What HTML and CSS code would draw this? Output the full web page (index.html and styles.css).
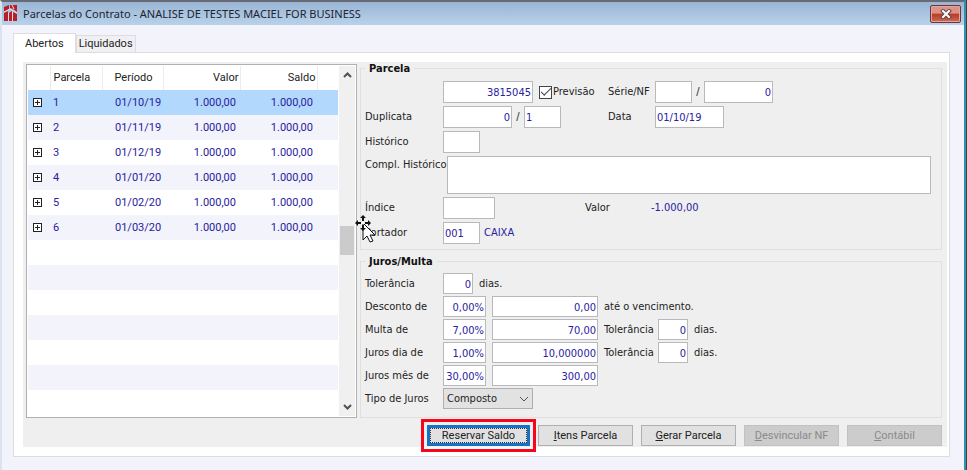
FILE: index.html
```html
<!DOCTYPE html>
<html lang="pt-BR">
<head>
    <meta charset="UTF-8">
    <meta name="viewport" content="width=device-width, initial-scale=1.0">
    <title>Parcelas do Contrato</title>
    <link rel="stylesheet" href="styles.css">
</head>
<body>
    <div class="window">
        <header class="titlebar">
            <svg class="logo" width="14" height="17" viewBox="0 0 14 17">
                <path d="M0 2L5 0V4L0 7ZM6 0H13V7L9 4L6 3Z" fill="#b5202a"/>
                <path d="M0 8L4 6V16H0ZM5 8L8 6V16H5ZM9 7L13 9V16H9Z" fill="#b5202a"/>
                <path d="M0 7L6 4L13 8M4.500 8V16M8.500 7V16M8 0L10 4" fill="none" stroke="#f3d9dc"/>
            </svg>
            <h1>Parcelas do Contrato - ANALISE DE TESTES MACIEL FOR BUSINESS</h1>
            <button class="close" aria-label="Fechar">
                <svg width="12" height="10" viewBox="0 0 12 10">
                    <path d="M3 2L9 8M9 2L3 8" stroke="#5c4650" stroke-width="4" stroke-linecap="square"/>
                    <path d="M3 2L9 8M9 2L3 8" stroke="#fff" stroke-width="2" stroke-linecap="square"/>
                </svg>
            </button>
        </header>
        <main class="content">
            <div class="tabs" role="tablist">
                <button class="tab active" role="tab" aria-selected="true">Abertos</button>
                <button class="tab" role="tab" aria-selected="false">Liquidados</button>
            </div>
            <div class="page">
                <div class="panel">
                    <div class="columns">
                        <div class="list">
                            <table>
                                <thead>
                                    <tr><th class="c_exp"></th><th class="c_num">Parcela</th><th class="c_date">Período</th><th class="c_val">Valor</th><th class="c_val">Saldo</th><th></th></tr>
                                </thead>
                                <tbody>
                                    <tr class="selected"><td><button class="expand" aria-label="Expandir"></button></td><td>1</td><td>01/10/19</td><td>1.000,00</td><td>1.000,00</td><td></td></tr>
                                    <tr><td><button class="expand" aria-label="Expandir"></button></td><td>2</td><td>01/11/19</td><td>1.000,00</td><td>1.000,00</td><td></td></tr>
                                    <tr><td><button class="expand" aria-label="Expandir"></button></td><td>3</td><td>01/12/19</td><td>1.000,00</td><td>1.000,00</td><td></td></tr>
                                    <tr><td><button class="expand" aria-label="Expandir"></button></td><td>4</td><td>01/01/20</td><td>1.000,00</td><td>1.000,00</td><td></td></tr>
                                    <tr><td><button class="expand" aria-label="Expandir"></button></td><td>5</td><td>01/02/20</td><td>1.000,00</td><td>1.000,00</td><td></td></tr>
                                    <tr><td><button class="expand" aria-label="Expandir"></button></td><td>6</td><td>01/03/20</td><td>1.000,00</td><td>1.000,00</td><td></td></tr>
                                    <tr><td colspan="6"></td></tr>
                                    <tr><td colspan="6"></td></tr>
                                    <tr><td colspan="6"></td></tr>
                                    <tr><td colspan="6"></td></tr>
                                    <tr><td colspan="6"></td></tr>
                                    <tr><td colspan="6"></td></tr>
                                    <tr><td colspan="6"></td></tr>
                                </tbody>
                            </table>
                            <div class="scroll">
                                <svg width="9" height="6" viewBox="0 0 9 6"><path d="M1 5L4.500 1.500L8 5" fill="none" stroke="#505050" stroke-width="2"/></svg>
                                <div class="track"><div class="thumb"></div></div>
                                <svg width="9" height="6" viewBox="0 0 9 6"><path d="M1 1L4.500 4.500L8 1" fill="none" stroke="#505050" stroke-width="2"/></svg>
                            </div>
                        </div>
                        <form class="details">
                            <fieldset class="parcela">
                                <legend>Parcela</legend>
                                <div class="row">
                                    <span></span>
                                    <div class="group"><input class="w_l num" type="text" value="3815045" aria-label="Parcela"><label class="check"><input type="checkbox" checked>Previsão</label></div>
                                    <label for="serie">Série/NF</label>
                                    <div class="group"><input class="w_s" type="text" id="serie"><span class="slash">/</span><input class="w_m num" type="text" value="0" aria-label="NF"></div>
                                </div>
                                <div class="row">
                                    <label for="duplicata">Duplicata</label>
                                    <div class="group"><input class="w_m num" type="text" id="duplicata" value="0"><span class="slash">/</span><input class="w_s" type="text" value="1" aria-label="Sequência"></div>
                                    <label for="data">Data</label>
                                    <div class="group"><input class="w_m" type="text" id="data" value="01/10/19"></div>
                                </div>
                                <div class="row">
                                    <label for="historico">Histórico</label>
                                    <div class="group"><input class="w_s" type="text" id="historico"></div>
                                </div>
                                <div class="row wide">
                                    <label for="compl">Compl. Histórico</label>
                                    <textarea id="compl"></textarea>
                                </div>
                                <div class="row amount">
                                    <label for="indice">Índice</label>
                                    <div class="group"><input class="w_i" type="text" id="indice"></div>
                                    <span>Valor</span>
                                    <output class="value">-1.000,00</output>
                                </div>
                                <div class="row">
                                    <label for="portador">Portador</label>
                                    <div class="group"><input class="w_s" type="text" id="portador" value="001"><span class="value name">CAIXA</span></div>
                                </div>
                            </fieldset>
                            <fieldset class="juros">
                                <legend>Juros/Multa</legend>
                                <div class="line">
                                    <label for="tol">Tolerância</label>
                                    <input class="w_d num" type="text" id="tol" value="0"><span>dias.</span>
                                </div>
                                <div class="line">
                                    <label for="desc">Desconto de</label>
                                    <input class="w_p num" type="text" id="desc" value="0,00%"><input class="w_v num" type="text" value="0,00" aria-label="Valor do desconto"><span>até o vencimento.</span>
                                </div>
                                <div class="line">
                                    <label for="multa">Multa de</label>
                                    <input class="w_p num" type="text" id="multa" value="7,00%"><input class="w_v num" type="text" value="70,00" aria-label="Valor da multa"><label class="tol" for="tol_multa">Tolerância</label><input class="w_d num" type="text" id="tol_multa" value="0"><span>dias.</span>
                                </div>
                                <div class="line">
                                    <label for="jdia">Juros dia de</label>
                                    <input class="w_p num" type="text" id="jdia" value="1,00%"><input class="w_v num" type="text" value="10,000000" aria-label="Valor dos juros por dia"><label class="tol" for="tol_juros">Tolerância</label><input class="w_d num" type="text" id="tol_juros" value="0"><span>dias.</span>
                                </div>
                                <div class="line">
                                    <label for="jmes">Juros mês de</label>
                                    <input class="w_p num" type="text" id="jmes" value="30,00%"><input class="w_v num" type="text" value="300,00" aria-label="Valor dos juros por mês">
                                </div>
                                <div class="line">
                                    <label for="tipo">Tipo de Juros</label>
                                    <div class="select">
                                        <select id="tipo"><option>Composto</option></select>
                                        <svg width="10" height="6" viewBox="0 0 10 6"><path d="M1 1L5 5L9 1" fill="none" stroke="#555"/></svg>
                                    </div>
                                </div>
                            </fieldset>
                            <svg class="cursor" width="22" height="32" viewBox="0 0 22 32">
                                <path d="M8 8V25L12 21L15 27L18 26L15 20H20Z" fill="#fff" stroke="#111"/>
                                <path d="M8 0L11 3H5ZM8 16L5 13H11ZM0 8L3 5V11ZM16 8L13 5V11Z" fill="#111"/>
                                <path d="M8 3V6M8 10V13M2 8H6M10 8H14" stroke="#111" stroke-width="2"/>
                                <path d="M7 7H9V9H7Z" fill="#fff"/>
                            </svg>
                        </form>
                    </div>
                    <div class="actions">
                        <span class="highlight"><button class="btn focus">Reservar Saldo</button></span>
                        <button class="btn"><u>I</u>tens Parcela</button>
                        <button class="btn"><u>G</u>erar Parcela</button>
                        <button class="btn" disabled><u>D</u>esvincular NF</button>
                        <button class="btn" disabled><u>C</u>ontábil</button>
                    </div>
                </div>
            </div>
        </main>
    </div>
</body>
</html>
```
FILE: styles.css
```css
*{box-sizing: border-box;}
body,h1,fieldset,legend,button,input,textarea,select{margin: 0; padding: 0;}
body{
    background: #3c4048; color: #222;
    font: 11px/14px "DejaVu Sans Condensed", "DejaVu Sans", sans-serif;
}
button,input,textarea,select{font: inherit; color: inherit; border-radius: 0;}
svg{display: block;}

.window{
    min-height: 100vh; margin-right: 1px; border-top: 2px solid #666a74;
    border-left: 2px solid #dbe3f0; border-right: 2px solid #2f93ae;
    background: #f2f3fb;
}
.titlebar{
    display: flex; align-items: center; gap: 5px; height: 23px; padding: 0 3px 0 2px;
    background: linear-gradient(#9ab5d4, #b9d2ea);
}
.titlebar>h1{flex: 1; font: 11px/16px "Noto Sans", sans-serif; color: #1c2433;}
.close{
    display: flex; justify-content: center; align-items: center; width: 31px; height: 18px;
    border: 1px solid #6a3540; border-radius: 2px; box-shadow: inset 0 0 0 1px #e3a79f;
    background: linear-gradient(#dd9286 45%, #b93a25 50%, #cf6a50);
}

.content{padding: 8px 14px 0 11px;}
.tabs{display: flex; align-items: flex-end; height: 19px;}
.tab{
    height: 17px; padding: 0 2px; border: 1px solid #dcdde3; border-bottom: none;
    background: #f0f0f3; font: 11px/16px Roboto, sans-serif;
}
.tab.active{height: 20px; padding: 0 11px; margin-bottom: -1px; background: #fff; z-index: 1;}
.page{padding: 9px 2px 9px 9px; border: 1px solid #dcdde3; background: #fff;}
.panel{padding: 0 5px 1px 3px; background: #efefef;}
.columns{display: flex; gap: 3px;}

.list{
    display: flex; gap: 1px; flex: 0 0 331px; margin-top: 2px; padding: 1px;
    border: 1px solid #b0b0b0; background: #fff;
}
.list>table{
    flex: 1; width: 100%; align-self: flex-start; table-layout: fixed; border-collapse: collapse;
    font: 11px/14px Roboto, sans-serif;
}
.list th{height: 24px; padding: 0 3px; border-right: 1px solid #ececec; font-weight: normal; text-align: left;}
.list th:last-child{border-right: none;}
.list td{height: 25px; padding: 0 3px; color: #2a21a0;}
.list tbody tr:nth-child(even){background: #f2f3fb;}
.list tbody tr.selected{background: #b3d8fd;}
.list .c_exp{width: 22px;}
.list .c_num{width: 52px;}
.list .c_date{width: 61px; padding-left: 12px;}
.list .c_val{width: 77px; padding-right: 1px; text-align: right;}
.list td:nth-child(3){padding-left: 13px;}
.list td:nth-child(4),.list td:nth-child(5){padding-right: 4px; text-align: right;}
.expand{
    display: block; width: 9px; height: 9px; border: 1px solid #222; margin-left: 2px;
    background:
        linear-gradient(#222,#222) center/5px 1px no-repeat,
        linear-gradient(#222,#222) center/1px 5px no-repeat, #fff;
}
.scroll{
    display: flex; flex-direction: column; align-items: center; gap: 5px;
    flex: 0 0 16px; padding: 6px 0; background: #f0f0f0;
}
.scroll>.track{display: flex; flex-direction: column; flex: 1; width: 14px; padding: 143px 0 0;}
.scroll .thumb{height: 29px; background: #cbcbcb;}

.details{flex: 1; min-width: 0; position: relative;}
fieldset{display: flex; flex-direction: column; min-width: 0; border: 1px solid #dfdfdf;}
legend{padding: 0 4px; font-weight: bold; line-height: 13px; color: #111;}
.parcela{gap: 3px; padding: 6px 10px 5px 4px;}
.juros{gap: 2px; margin-top: 5px; padding: 5px 10px 8px 4px;}
.row{display: grid; grid-template-columns: 78px 165px 47px 1fr; align-items: center; height: 22px;}
.row.wide{grid-template-columns: max-content 1fr; align-items: start; height: 38px;}
.row.wide>label{padding-top: 2px;}
.row.amount{grid-template-columns: 78px 142px 66px 1fr;}
.group,.line{display: flex; align-items: center;}
.line{height: 21px; gap: 6px;}
.line>label:first-child{width: 72px;}
.line>.tol{width: 48px;}
input[type=text],textarea{height: 22px; padding: 1px 1px 0; border: 1px solid #b9b9bd; background: #fff; color: #2a21a0;}
.line input[type=text]{height: 21px;}
.num[type=text]{text-align: right;}
textarea{display: block; width: 100%; height: 38px; resize: none;}
.w_l{width: 90px;}
.w_m{width: 69px;}
.w_s{width: 37px;}
.w_i{width: 52px;}
.w_d{width: 30px;}
.w_p{width: 43px;}
.w_v{width: 106px;}
.slash{width: 12px; text-align: center;}
.value{color: #2a21a0;}
.value.name{padding-left: 4px;}
.check{display: flex; align-items: center; gap: 1px; padding-left: 6px;}
.check>input{
    appearance: none; width: 13px; height: 13px; border: 1px solid #444;
    background: #fff; display: grid; place-items: center;
}
.check>input:checked::before{
    content: ""; width: 9px; height: 4px; border: solid #444; border-width: 0 0 1px 1px;
    transform: rotate(-45deg); margin-bottom: 3px;
}
.select{display: grid; align-items: center; width: 90px; height: 21px;}
.select>select{
    grid-area: 1/1; width: 100%; height: 21px; padding: 0 3px; appearance: none;
    border: 1px solid #b0b0b0; background: #e2e2e2;
}
.select>svg{grid-area: 1/1; justify-self: end; margin-right: 4px; pointer-events: none;}

.actions{display: flex; justify-content: flex-end; gap: 8px; margin-top: 7px;}
.btn{
    display: block; width: 95px; height: 21px; border: 1px solid #b0b0b0; background: #e1e1e1;
    font: 11px/14px Roboto, sans-serif;
}
.btn:disabled{border-color: #c2c2c2; background: #cccccc; color: #8a8a8a;}
.btn.focus{width: 103px; border: 3px solid #1673c4; outline: 1px dotted #333; outline-offset: -4px;}
.highlight{outline: 3px solid #f5061a; outline-offset: 3px;}

.cursor{position: absolute; left: -5px; top: 153px; pointer-events: none;}
```
